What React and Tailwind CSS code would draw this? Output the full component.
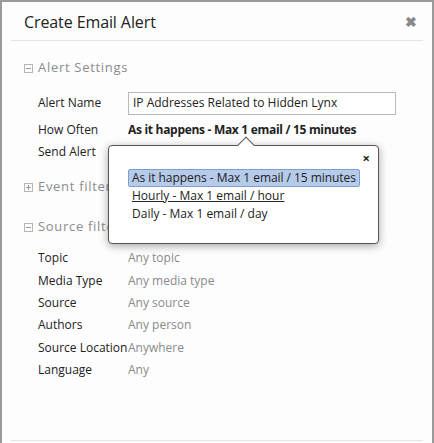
import React from "react";

function Box({ plus }) {
  return (
    <span className="relative inline-block w-[9px] h-[9px] border border-[#b5b5b5] mr-[5px] shrink-0">
      <span className="absolute left-[1px] right-[1px] top-[3px] h-px bg-[#9a9a9a]" />
      {plus && <span className="absolute top-[1px] bottom-[1px] left-[3px] w-px bg-[#9a9a9a]" />}
    </span>
  );
}

function Row({ label, children, className = "h-[22px]" }) {
  return (
    <div className={"flex items-center " + className}>
      <div className="w-[90px] text-[#222] shrink-0">{label}</div>
      <div>{children}</div>
    </div>
  );
}

export default function App() {
  const font = { fontFamily: "'Open Sans', 'Liberation Sans', sans-serif" };
  return (
    <div className="w-[434px] h-[443px] bg-[#9a9a9a] overflow-hidden pt-[2px] pl-[2px] pr-[2px]" style={font}>
      <div className="relative w-[430px] h-[460px] bg-[#fdfdfd] text-[12px]">
        <div className="flex items-center justify-between h-[38px] pl-[22px] pr-[15px] pt-[2px]">
          <div className="text-[16px] text-[#222] tracking-[-0.1px]">Create Email Alert</div>
          <div className="text-[#8a8a8a] text-[14px] font-bold leading-none">✖</div>
        </div>
        <div className="mx-[9px] h-px bg-[#e4e4e4]" />
        <div className="pl-[22px] pt-[17px]">
          <div className="flex items-center text-[13px] text-[#8c8c8c] tracking-[0.7px] h-[20px]">
            <Box /> Alert Settings
          </div>
          <div className="pl-[14px] pt-[13px]">
            <Row label="Alert Name" className="h-[24px]">
              <div className="w-[268px] h-[23px] border border-[#b8b8b8] bg-white px-[4px] flex items-center text-[#222]">
                IP Addresses Related to Hidden Lynx
              </div>
            </Row>
            <Row label="How Often" className="h-[22px] mt-[4px]">
              <span className="font-bold text-[#222] tracking-[-0.3px]">As it happens - Max 1 email / 15 minutes</span>
            </Row>
            <Row label="Send Alert" />
          </div>
          <div className="flex items-center text-[13px] text-[#8c8c8c] tracking-[0.7px] h-[20px] mt-[14px]">
            <Box plus /> Event filters
          </div>
          <div className="flex items-center text-[13px] text-[#8c8c8c] tracking-[0.7px] h-[20px] mt-[20px]">
            <Box /> Source filters
          </div>
          <div className="pl-[14px] pt-[10px] text-[#222]">
            {[
              ["Topic", "Any topic"],
              ["Media Type", "Any media type"],
              ["Source", "Any source"],
              ["Authors", "Any person"],
              ["Source Location", "Anywhere"],
              ["Language", "Any"],
            ].map(([l, v]) => (
              <Row key={l} label={l} className="h-[22.4px]">
                <span className="text-[#8a8a8a]">{v}</span>
              </Row>
            ))}
          </div>
        </div>
        <div className="absolute left-[9px] right-[9px] top-[438px] h-px bg-[#e4e4e4]" />

        <div className="absolute left-[106px] top-[143px] w-[271px] h-[99px] bg-white border border-[#555] rounded-[4px] shadow-[0_2px_8px_rgba(0,0,0,0.35)]">
          <div className="absolute left-[131px] -top-[7px] w-[12px] h-[12px] bg-white border-l border-t border-[#555] rotate-45" />
          <div className="absolute right-[8px] top-[6px] text-[13px] font-bold text-[#222] leading-none">×</div>
          <div className="pl-[19px] pt-[23px] text-[#222] text-[12px]">
            <div className="inline-block h-[18px] px-[3px] bg-[#b5cbe9] border border-[#7a9fd4] rounded-[2px] leading-[16px] tracking-[-0.05px]">
              As it happens - Max 1 email / 15 minutes
            </div>
            <div className="pl-[4px] h-[18px] leading-[18px] underline">Hourly - Max 1 email / hour</div>
            <div className="pl-[4px] h-[18px] leading-[18px]">Daily - Max 1 email / day</div>
          </div>
        </div>
      </div>
    </div>
  );
}
